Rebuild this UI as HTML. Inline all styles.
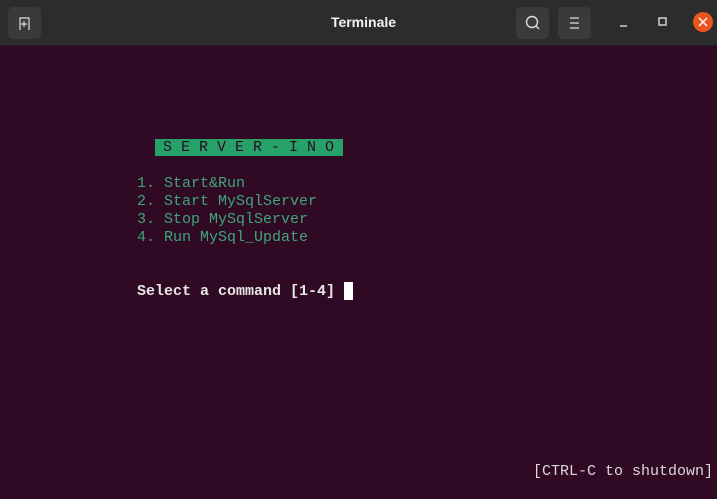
<!DOCTYPE html>
<html><head><meta charset="utf-8"><style>
html,body{margin:0;padding:0;width:717px;height:499px;overflow:hidden;background:#300a24;font-family:"Liberation Mono",monospace;}
.bar{position:absolute;left:0;top:0;width:717px;height:45px;background:#2c2c2c;border-bottom:1px solid #1e1e1e;}
.btn{position:absolute;top:7px;width:33px;height:32px;background:#3a3a3a;border-radius:5px;}
.title{position:absolute;left:0;width:727px;top:14px;text-align:center;color:#f2f2f2;font:bold 14px "Liberation Sans",sans-serif;}
.t{position:absolute;font-size:15px;line-height:18px;white-space:pre;}
.g{color:#3fa57a;}
.w{color:#e6e6e6;font-weight:bold;}
</style></head><body>
<div class="bar">
 <div class="btn" style="left:8px"><svg width="33" height="32"><path d="M12 23V11h9v12M13 17h6M16 14v6" stroke="#ddd" stroke-width="1.2" fill="none"/></svg></div>
 <div class="title">Terminale</div>
 <div class="btn" style="left:516px"><svg width="33" height="32"><circle cx="16" cy="15" r="5.5" stroke="#ddd" stroke-width="1.4" fill="none"/><path d="M20 19l3 3" stroke="#ddd" stroke-width="1.4"/></svg></div>
 <div class="btn" style="left:558px"><svg width="33" height="32"><path d="M12 11h9M12 16h9M12 21h9" stroke="#ddd" stroke-width="1.2"/></svg></div>
 <svg style="position:absolute;left:610px;top:10px" width="107" height="26"><path d="M10 16h7" stroke="#ddd" stroke-width="1.4"/><rect x="49" y="8" width="7" height="7" stroke="#ddd" stroke-width="1.4" fill="none"/><circle cx="93" cy="12" r="10" fill="#e95420"/><path d="M89 8l8 8M97 8l-8 8" stroke="#fff" stroke-width="1.4"/></svg>
</div>
<div style="position:absolute;left:155px;top:139px;width:188px;height:17px;background:#26a269;"></div>
<div class="t" style="left:163px;top:139px;color:#2a0c22;">S E R V E R - I N O</div>
<div class="t g" style="left:137px;top:175px">1. Start&amp;Run
2. Start MySqlServer
3. Stop MySqlServer
4. Run MySql_Update</div>
<div class="t w" style="left:137px;top:283px">Select a command [1-4] </div>
<div style="position:absolute;left:344px;top:282px;width:9px;height:18px;background:#fff"></div>
<div class="t" style="left:533px;top:463px;color:#d8d8d8">[CTRL-C to shutdown]</div>
</body></html>
